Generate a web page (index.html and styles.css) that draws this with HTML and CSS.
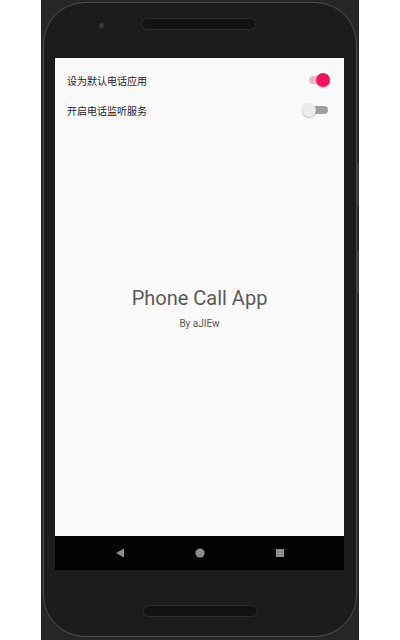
FILE: index.html
```html
<!DOCTYPE html>
<html lang="zh">
<head>
<meta charset="utf-8">
<link rel="stylesheet" href="styles.css">
</head>
<body>
<div class="frame">
  <div class="phone">
    <div class="top-bezel">
      <span class="camera"></span>
      <span class="speaker top"></span>
    </div>
    <div class="screen">
      <div class="settings">
        <div class="row">
          <span class="label">设为默认电话应用</span>
          <span class="switch on"><span class="track"></span><span class="thumb"></span></span>
        </div>
        <div class="row">
          <span class="label">开启电话监听服务</span>
          <span class="switch off"><span class="track"></span><span class="thumb"></span></span>
        </div>
      </div>
      <div class="center">
        <div class="title">Phone Call App</div>
        <div class="author">By aJIEw</div>
      </div>
    </div>
    <div class="navbar">
      <svg class="nav-icon" width="10" height="10" viewBox="0 0 10 10"><polygon points="9,0.5 9,9.5 1,5" fill="#8c8c8c"/></svg>
      <svg class="nav-icon" width="10" height="10" viewBox="0 0 10 10"><circle cx="5" cy="5" r="4.6" fill="#8c8c8c"/></svg>
      <svg class="nav-icon" width="10" height="10" viewBox="0 0 10 10"><rect x="1" y="1" width="8" height="8" fill="#8c8c8c"/></svg>
    </div>
    <div class="bottom-bezel">
      <span class="speaker bottom"></span>
    </div>
  </div>
</div>
</body>
</html>
```

FILE: styles.css
```css
html, body {
  margin: 0;
  padding: 0;
  background: #ffffff;
}

.frame {
  width: 318px;
  height: 640px;
  margin-left: 41px;
  background: #262626;
  padding: 2px 2px 3px 2px;
  box-sizing: border-box;
  position: relative;
}

.frame::after {
  content: "";
  position: absolute;
  right: 0;
  top: 163px;
  width: 2px;
  height: 44px;
  background: #3a3a3a;
  box-shadow: 0 87px 0 0 #3a3a3a;
}

.phone {
  height: 100%;
  box-sizing: border-box;
  border: 1.5px solid #4d4d4d;
  border-radius: 42px;
  background: #1c1c1c;
  display: flex;
  flex-direction: column;
  overflow: hidden;
}

.top-bezel {
  height: 55px;
  flex: none;
  display: flex;
  align-items: center;
  padding-left: 55px;
  box-sizing: border-box;
}

.camera {
  width: 5px;
  height: 5px;
  border-radius: 50%;
  background: #3a3a3a;
  margin-right: 38px;
  margin-top: -11px;
}

.speaker {
  width: 113px;
  height: 10px;
  border-radius: 5px;
  background: #121212;
  box-shadow: 0 0 0 1px #2c2c2c;
}

.speaker.top {
  margin-top: -13px;
}

.screen {
  flex: none;
  height: 478px;
  margin: 0 12px 0 11px;
  background: #fafafa;
  display: flex;
  flex-direction: column;
}

.settings {
  padding-top: 7px;
}

.row {
  height: 30px;
  display: flex;
  align-items: center;
  justify-content: space-between;
  padding: 0 14px 0 12px;
}

.label {
  font-family: "Noto Sans CJK SC", "Noto Sans", sans-serif;
  font-size: 10px;
  color: #1e1e1e;
}

.switch {
  position: relative;
  width: 28px;
  height: 14px;
  display: block;
}

.track {
  position: absolute;
  left: 7px;
  top: 3px;
  width: 19px;
  height: 8px;
  border-radius: 4px;
}

.thumb {
  position: absolute;
  top: 0;
  width: 14px;
  height: 14px;
  border-radius: 50%;
}

.on .track {
  background: #f7b3cb;
}

.on .thumb {
  right: 0;
  background: #f8125e;
  box-shadow: 0 1px 1px rgba(0,0,0,0.12);
}

.off .track {
  background: #9e9e9e;
}

.off .thumb {
  left: 0;
  background: #ececec;
  box-shadow: 0 1px 1.5px rgba(0,0,0,0.25);
}

.center {
  flex: 1;
  display: flex;
  flex-direction: column;
  align-items: center;
  justify-content: center;
  padding-bottom: 45px;
}

.title {
  font-family: Roboto, "Liberation Sans", sans-serif;
  font-size: 20px;
  color: #5a5a5a;
  line-height: 24px;
}

.author {
  font-family: Roboto, "Liberation Sans", sans-serif;
  font-size: 10px;
  color: #555555;
  margin-top: 8px;
  line-height: 12px;
}

.navbar {
  flex: none;
  height: 34px;
  margin: 0 12px 0 11px;
  background: #030303;
  display: flex;
  align-items: center;
  justify-content: center;
  gap: 70px;
}

.nav-icon {
  display: block;
}

.bottom-bezel {
  flex: 1;
  display: flex;
  justify-content: center;
  padding-top: 36px;
  box-sizing: border-box;
}
```
